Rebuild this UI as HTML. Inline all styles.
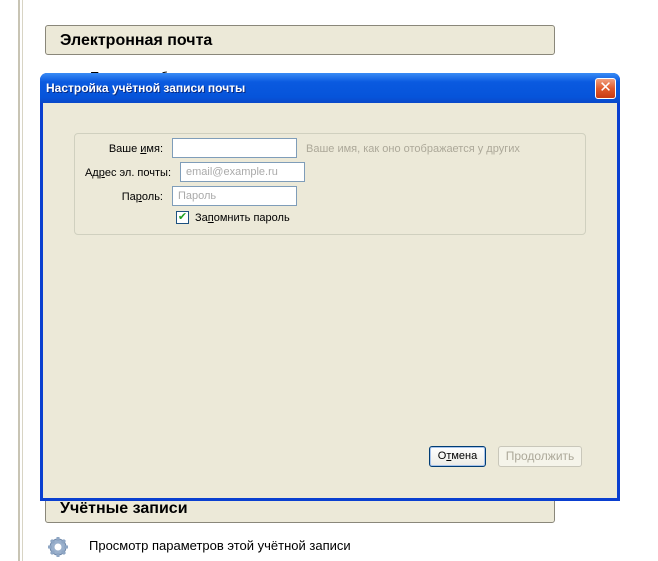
<!DOCTYPE html><html><head><meta charset="utf-8"><style>
body{margin:0;width:658px;height:561px;background:#fff;position:relative;overflow:hidden;font-family:Tahoma,"Liberation Sans","DejaVu Sans",sans-serif;}
.a{position:absolute}
.hdr{position:absolute;left:45px;width:510px;background:#ece9d8;border:1px solid #8a877a;border-radius:3px;font-weight:bold;font-size:16px;padding-left:14px;box-sizing:border-box}
.inp{position:absolute;height:20px;border:1px solid #7f9db9;background:#fff;box-sizing:border-box;font-size:11px;color:#aaa;padding:3px 0 0 5px}
.lbl{position:absolute;font-size:11px;color:#000;text-align:right}
</style></head><body>
<div class="a" style="left:18px;top:0;width:2px;height:561px;background:#c8c4b4"></div>
<div class="a" style="left:22px;top:0;width:1px;height:561px;background:#d8d4c4"></div>
<div class="hdr" style="top:25px;height:30px;line-height:29px">Электронная почта</div>
<div class="a" style="left:90px;top:69px;font-size:13px">Просмотр об</div>
<div class="hdr" style="top:495px;height:28px;line-height:26px">Учётные записи</div>
<svg class="a" style="left:45px;top:535px" width="26" height="24" viewBox="0 0 26 24"><g fill="#9ab0cc" stroke="#6d86a8" stroke-width="1"><circle cx="13" cy="12" r="8"/><g stroke-width="3" stroke="#8ea6c4"><path d="M13 2v4M13 18v4M3 12h4M19 12h4M6 5l3 3M17 16l3 3M20 5l-3 3M9 16l-3 3"/></g></g><circle cx="13" cy="12" r="3.5" fill="#fff"/></svg>
<div class="a" style="left:89px;top:538px;font-size:13px">Просмотр параметров этой учётной записи</div>
<div class="a" style="left:40px;top:73px;width:580px;height:428px;background:#0a3fd0;border-radius:7px 7px 0 0;box-sizing:border-box">
 <div class="a" style="left:0;top:0;width:580px;height:30px;border-radius:7px 7px 0 0;background:linear-gradient(#3a8cf5,#0a5ae0 30%,#0654da 80%,#0a48c8)"></div>
 <div class="a" style="left:6px;top:8px;color:#fff;font-weight:bold;font-size:12px;text-shadow:1px 1px #0a2a80">Настройка учётной записи почты</div>
 <div class="a" style="left:555px;top:5px;width:21px;height:21px;background:linear-gradient(#f0a080,#e05a2c 50%,#c83a14);border:1px solid #fff;border-radius:3px;box-sizing:border-box;color:#fff;font-size:15px;font-weight:bold;text-align:center;line-height:18px">✕</div>
 <div class="a" style="left:3px;top:30px;width:574px;height:395px;background:#ece9d8"></div>
</div>
<div class="a" style="left:74px;top:133px;width:512px;height:102px;border:1px solid #d0d0bf;border-radius:4px;box-sizing:border-box"></div>
<div class="lbl" style="left:80px;top:143px;width:83px">Ваше <u>и</u>мя:</div>
<div class="inp" style="left:172px;top:138px;width:125px"></div>
<div class="a" style="left:306px;top:143px;font-size:11px;color:#aca899">Ваше имя, как оно отображается у других</div>
<div class="lbl" style="left:76px;top:167px;width:95px">Ад<u>р</u>ес эл. почты:</div>
<div class="inp" style="left:180px;top:162px;width:125px">email@example.ru</div>
<div class="lbl" style="left:80px;top:191px;width:83px">Па<u>р</u>оль:</div>
<div class="inp" style="left:172px;top:186px;width:125px">Пароль</div>
<div class="a" style="left:176px;top:211px;width:13px;height:13px;border:1px solid #1c5180;background:#fff;box-sizing:border-box;color:#21a121;font-size:11px;line-height:11px;text-align:center;font-weight:bold">✔</div>
<div class="a" style="left:195px;top:212px;font-size:11px">За<u>п</u>омнить пароль</div>
<div class="a" style="left:429px;top:446px;width:57px;height:21px;border:1px solid #003c74;border-radius:3px;background:linear-gradient(#fff,#ecebe6);box-shadow:inset 0 0 0 1px #a8c4ec;box-sizing:border-box;font-size:11px;text-align:center;line-height:19px">О<u>т</u>мена</div>
<div class="a" style="left:498px;top:446px;width:84px;height:21px;border:1px solid #c9c7ba;border-radius:3px;background:#f5f4ea;box-sizing:border-box;font-size:12px;color:#aca899;text-align:center;line-height:19px">Продолжить</div>
</body></html>
